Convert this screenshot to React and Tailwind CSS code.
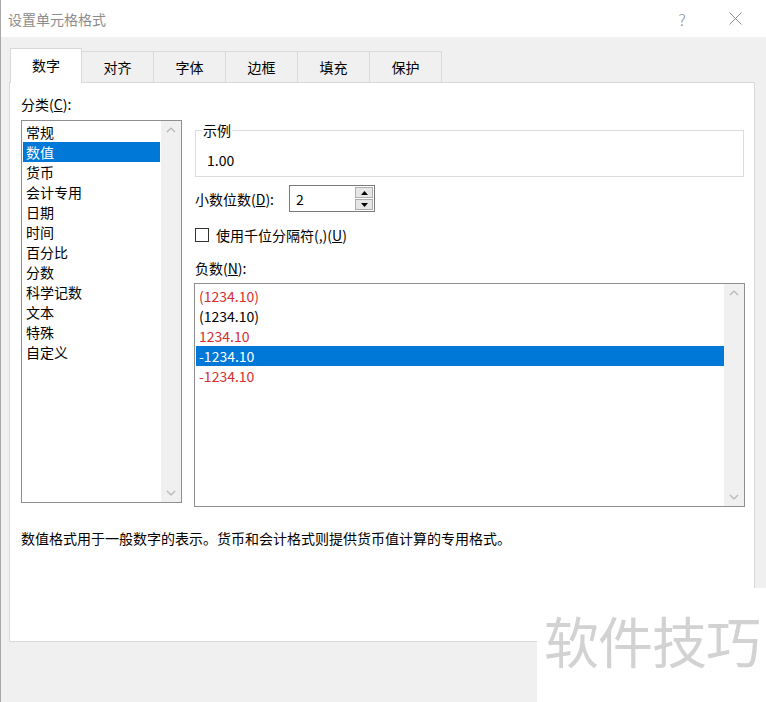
import React from "react";

const categories = ["常规", "数值", "货币", "会计专用", "日期", "时间", "百分比", "分数", "科学记数", "文本", "特殊", "自定义"];

const negatives = [
  { text: "(1234.10)", red: true },
  { text: "(1234.10)", red: false },
  { text: "1234.10", red: true },
  { text: "-1234.10", red: false, selected: true },
  { text: "-1234.10", red: true },
];

const tabs = ["数字", "对齐", "字体", "边框", "填充", "保护"];

const Chevron = ({ down }) => (
  <svg width="10" height="6" viewBox="0 0 10 6" className="block">
    <path
      d={down ? "M1 1 L5 5 L9 1" : "M1 5 L5 1 L9 5"}
      fill="none"
      stroke="#b4b4b4"
      strokeWidth="1.2"
    />
  </svg>
);

const ScrollBar = () => (
  <div className="w-[20px] bg-[#f0f0f0] flex flex-col justify-between items-center py-[6px]">
    <Chevron />
    <Chevron down />
  </div>
);

const Tab = ({ label, active }) => {
  if (active) {
    return (
      <div className="relative z-10 -mb-px h-[35px] w-[72px] bg-white border border-b-0 border-[#d9d9d9] flex items-center justify-center pb-[2px] text-black">
        {label}
      </div>
    );
  }
  return (
    <div className="h-[31px] w-[72px] bg-[#f0f0f0] border border-l-0 border-b-0 border-[#d9d9d9] flex items-center justify-center pb-[1px] text-black">
      {label}
    </div>
  );
};

const App = () => {
  return (
    <div className="relative w-[766px] h-[702px] overflow-hidden bg-[#f0f0f0] border-l border-[#a8a8a8] font-['Noto_Sans_CJK_SC',sans-serif] text-[14px] leading-[20px] text-black">
      {/* title bar */}
      <div className="h-[37px] bg-white flex items-center pl-[7px]">
        <div className="text-[#8c8c8c] flex-1">设置单元格格式</div>
        <div className="text-[#8c8c8c] text-[16px] font-light w-[20px] text-center mr-[37px]">?</div>
        <svg width="13" height="13" viewBox="0 0 13 13" className="mr-[24px]">
          <path d="M0.5 0.5 L12.5 12.5 M12.5 0.5 L0.5 12.5" stroke="#8c8c8c" strokeWidth="1" />
        </svg>
      </div>

      {/* tabs */}
      <div className="flex items-end pl-[9px] pt-[11px]">
        {tabs.map((t, i) => (
          <Tab key={t} label={t} active={i === 0} />
        ))}
      </div>

      {/* panel */}
      <div className="ml-[8px] w-[746px] h-[560px] bg-white border border-[#d9d9d9] pl-[11px] pt-[11px]">
        <div className="flex gap-[12px]">
          {/* left column */}
          <div className="w-[161px]">
            <div>
              分类(<span className="underline">C</span>):
            </div>
            <div className="mt-[6px] h-[383px] border border-[#8f8f8f] flex">
              <div className="flex-1 p-px">
                {categories.map((c) => (
                  <div
                    key={c}
                    className={c === "数值" ? "pl-[3px] h-[20px] bg-[#0078d7] text-white" : "pl-[3px] h-[20px]"}
                  >
                    {c}
                  </div>
                ))}
              </div>
              <ScrollBar />
            </div>
          </div>

          {/* right column */}
          <div className="w-[551px]">
            <fieldset className="mt-[26px] ml-px w-[549px] border border-[#dcdcdc] px-[6px] pb-[6px]">
              <legend className="px-px">示例</legend>
              <div className="pl-[5px] mt-[10px]">1.00</div>
            </fieldset>

            <div className="flex items-center mt-[8px] ml-px">
              <div className="w-[94px]">
                小数位数(<span className="underline">D</span>):
              </div>
              <div className="w-[86px] h-[27px] border border-[#7a7a7a] flex items-center pl-[6px] pr-[1px]">
                <div className="flex-1">2</div>
                <div className="flex flex-col gap-px w-[18px]">
                  <div className="h-[11px] bg-[#e6e6e6] border border-[#adadad] flex items-center justify-center">
                    <svg width="7" height="4" viewBox="0 0 7 4"><path d="M0 4 L3.5 0 L7 4 Z" fill="#000" /></svg>
                  </div>
                  <div className="h-[11px] bg-[#e6e6e6] border border-[#adadad] flex items-center justify-center">
                    <svg width="7" height="4" viewBox="0 0 7 4"><path d="M0 0 L3.5 4 L7 0 Z" fill="#000" /></svg>
                  </div>
                </div>
              </div>
            </div>

            <div className="flex items-center mt-[13px] ml-px">
              <div className="w-[14px] h-[14px] border border-[#333]" />
              <div className="ml-[7px]">
                使用千位分隔符(,)(<span className="underline">U</span>)
              </div>
            </div>

            <div className="mt-[13px] ml-px">
              负数(<span className="underline">N</span>):
            </div>
            <div className="mt-[5px] h-[224px] border border-[#8f8f8f] flex">
              <div className="flex-1 pt-[2px] pl-px">
                {negatives.map((n, i) => (
                  <div
                    key={i}
                    className={
                      n.selected
                        ? "pl-[3px] h-[20px] bg-[#0078d7] text-white"
                        : n.red
                        ? "pl-[3px] h-[20px] text-[#d32f2f]"
                        : "pl-[3px] h-[20px]"
                    }
                  >
                    {n.text}
                  </div>
                ))}
              </div>
              <ScrollBar />
            </div>
          </div>
        </div>

        <div className="mt-[21px]">
          数值格式用于一般数字的表示。货币和会计格式则提供货币值计算的专用格式。
        </div>
      </div>

      {/* watermark */}
      <div className="absolute left-[536px] top-[588px] w-[230px] h-[114px] bg-white flex items-center pl-[7px] pb-[12px]">
        <span className="text-[55px] leading-[60px] text-[#d2d2d2] tracking-[-1px]">软件技巧</span>
      </div>
    </div>
  );
};

export default App;
